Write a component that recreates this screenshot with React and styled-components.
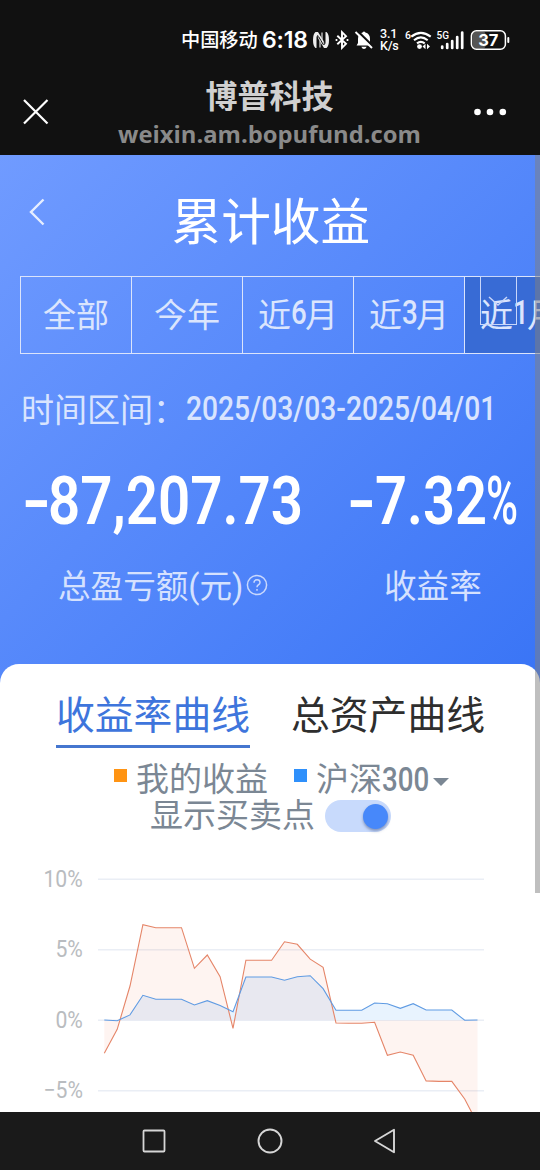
import React from "react";
import styled, { createGlobalStyle } from "styled-components";

const GlobalStyle = createGlobalStyle`
  * {
    box-sizing: border-box;
  }

  body {
    margin: 0;
    background: #fff;
    font-family: Roboto, "Noto Sans CJK SC", sans-serif;
  }
`;

const Phone = styled.div`
  display: flex;
  flex-direction: column;
  width: 540px;
  height: 1170px;
  overflow: hidden;
`;

const StatusBar = styled.div`
  display: flex;
  align-items: center;
  height: 65px;
  padding: 15px 0 0 181px;
  background: #111;
  color: #fff;
  white-space: nowrap;

  svg {
    flex: none;
    display: block;
  }
`;

const Carrier = styled.span`
  width: 81px;
  margin-top: 2px;
  font-size: 19.2px;
  font-weight: 500;
  line-height: 24px;
`;

const Clock = styled.span`
  width: 50px;
  font-family: Inter, sans-serif;
  font-size: 23px;
  font-weight: 600;
  line-height: 24px;
  letter-spacing: -0.2px;
`;

const IconGroup = styled.div`
  display: flex;
  align-items: center;
  gap: 5px;
  width: 68px;
`;

const NetSpeed = styled.div`
  display: flex;
  flex-direction: column;
  width: 24px;
  font-size: 12.5px;
  font-weight: 500;
  line-height: 12px;
  letter-spacing: -0.2px;
`;

const TitleBar = styled.div`
  display: flex;
  align-items: center;
  justify-content: space-between;
  height: 90px;
  padding: 4px 33px 0 23px;
  background: #111;
`;

const TitleText = styled.div`
  display: flex;
  flex-direction: column;
  align-items: center;
  width: 310px;
  margin: 3px 0 0 17px;

  strong {
    color: #d0d0d0;
    font-size: 32px;
    line-height: 40px;
    font-weight: 700;
  }

  span {
    color: #8a8a8a;
    font-family: "Open Sans", sans-serif;
    font-size: 23.8px;
    line-height: 34px;
    font-weight: 700;
  }
`;

const Page = styled.div`
  position: relative;
  flex: 1;
  overflow: hidden;
  background: linear-gradient(135deg, #709bff 0, #3a75f6 742px);
`;

const Scrollbar = styled.div`
  position: absolute;
  top: 0;
  right: 0;
  width: 5.5px;
  height: 738px;
  background: rgba(128, 128, 128, 0.5);
`;

const PageHead = styled.div`
  display: flex;
  align-items: flex-start;
  height: 121px;
  padding: 43px 0 0 29px;

  h1 {
    margin: -11px 0 0 126.5px;
    color: #fff;
    font-size: 49.7px;
    font-weight: 400;
    line-height: 72px;
  }
`;

const Ranges = styled.div`
  display: flex;
  width: 576px;
  height: 78px;
  margin-left: 20px;
  border: 1px solid #dbe4fb;
`;

const Range = styled.div`
  position: relative;
  display: flex;
  align-items: center;
  justify-content: center;
  flex: none;
  width: 111px;
  padding-bottom: 5px;
  border-right: 1px solid #dbe4fb;
  background: ${(p) => (p.$active ? "#386bd5" : "transparent")};
  color: #dbe5fd;
  font-size: 33px;
  white-space: nowrap;

  b {
    width: 14px;
    font-weight: 500;
    transform: scaleX(0.84);
    transform-origin: left center;
  }
`;

const DropMark = styled.div`
  position: absolute;
  top: -1px;
  left: 15px;
  width: 37px;
  height: 49px;
  padding: 19px 0 0 7px;
  border: 1px solid #c8d6fa;

  svg {
    display: block;
  }
`;

/* Narrow DIN-like figures */
const Num = styled.span`
  display: inline-block;
  font-family: Roboto, sans-serif;
  font-weight: ${(p) => p.$weight || 400};
  transform: scaleX(${(p) => p.$scale || 0.88});
  transform-origin: ${(p) => p.$origin || "left"} center;
  white-space: nowrap;
`;

const Period = styled.div`
  display: flex;
  align-items: center;
  height: 50px;
  margin-top: 29px;
  padding-left: 21px;
  color: #d9e4fe;
  font-size: 33px;

  > span:first-child {
    width: 165px;
    white-space: nowrap;
  }
`;

const Totals = styled.div`
  display: flex;
  height: 231px;
  padding-top: 32px;
  color: #fff;
`;

const Total = styled.div`
  width: ${(p) => p.$width}px;
  flex: none;
`;

const Figure = styled.div`
  display: flex;
  height: 74px;
  padding-left: ${(p) => p.$left}px;
  font-size: 66px;
  line-height: 74px;
`;

const Slot = styled.div`
  width: ${(p) => p.$width}px;
  flex: none;
`;

const Caption = styled.div`
  display: flex;
  align-items: center;
  height: 50px;
  margin-top: 19px;
  padding-left: ${(p) => p.$left}px;
  color: #d5e1fe;
  font-size: 32.6px;
  white-space: nowrap;

  svg {
    margin: 4px 0 0 3px;
  }
`;

const Card = styled.div`
  height: 460px;
  padding-top: 26px;
  border-radius: 19px 19px 0 0;
  background: #fff;
`;

const Tabs = styled.div`
  display: flex;
  gap: 41px;
  padding-left: 56px;
`;

const Tab = styled.div`
  height: 58px;
  border-bottom: 3px solid ${(p) => (p.$active ? "#4576cf" : "transparent")};
  color: ${(p) => (p.$active ? "#3e75dc" : "#2e2e2e")};
  font-size: 38.8px;
  line-height: 52px;
  white-space: nowrap;
`;

const Legend = styled.div`
  display: flex;
  align-items: center;
  height: 36px;
  margin-top: 14px;
  padding-left: 114px;
  color: #7b8794;
  font-size: 33px;
  line-height: 36px;
  white-space: nowrap;
`;

const Swatch = styled.i`
  width: 13px;
  height: 13px;
  margin: -9px 9px 0 ${(p) => p.$left || 0}px;
  background: ${(p) => p.$color};
`;

const Caret = styled.i`
  margin: 3px 0 0 -5px;
  border: 8px solid transparent;
  border-top-color: #7b8794;
  border-bottom: 0;
`;

const SwitchRow = styled.div`
  display: flex;
  align-items: center;
  height: 36px;
  padding-left: 150px;
  color: #7b8794;
  font-size: 33px;
  line-height: 38px;
`;

const Switch = styled.div`
  display: flex;
  align-items: center;
  justify-content: flex-end;
  width: 66px;
  height: 32px;
  margin-left: 10px;
  padding-right: 3px;
  border-radius: 16px;
  background: #c8dafc;

  &::after {
    content: "";
    width: 25px;
    height: 25px;
    border-radius: 50%;
    background: #4788fa;
    box-shadow: 0 2px 3px rgba(60, 80, 130, 0.5);
  }
`;

const ChartArea = styled.div`
  display: flex;
  height: 278px;
`;

const Axis = styled.div`
  display: flex;
  flex-direction: column;
  width: 83px;
  padding-top: 32px;
  color: #b9bcc0;
  font-size: 23px;

  span {
    height: 70.4px;
    line-height: 28px;
    text-align: right;
  }
`;

const NavBar = styled.div`
  display: flex;
  align-items: center;
  justify-content: space-between;
  height: 58px;
  padding: 0 143px 0 142px;
  background: #1a1a1a;
`;

const ranges = [
  { text: "全部" },
  { text: "今年" },
  { months: 6 },
  { months: 3 },
  { months: 1, active: true },
];

const mine = [
  -2.34, -0.64, 2.43, 6.78, 6.57, 6.57, 6.57, 3.69, 4.63, 3.09, -0.57, 4.26,
  4.26, 4.26, 5.57, 5.39, 4.33, 3.76, -0.19, -0.21, -0.21, -0.14, -2.48, -2.25,
  -2.48, -4.3, -4.33, -4.33, -5.58, -7.32,
];

const index300 = [
  0.02, -0.03, 0.38, 1.77, 1.49, 1.49, 1.49, 1.09, 1.39, 1.04, 0.61, 3.07,
  3.07, 3.07, 2.84, 3.09, 3.16, 2.24, 0.71, 0.71, 0.71, 1.23, 1.18, 0.85, 1.18,
  0.73, 0.73, 0.73, 0, 0.02,
];

const ZERO = 186.3;
const toY = (v) => ZERO - v * 14.1;
const toPoints = (data) =>
  data.map((v, i) => `${(21.3 + i * 12.87).toFixed(1)},${toY(v).toFixed(1)}`).join(" ");
const toArea = (data) => `21.3,${ZERO} ${toPoints(data)} 394.5,${ZERO}`;

const Chart = () => (
  <svg width="457" height="278">
    {[10, 5, 0, -5].map((v) => (
      <line key={v} x1="15" x2="401" y1={toY(v)} y2={toY(v)} stroke="#eaeef5" strokeWidth="1.5" />
    ))}
    <polygon points={toArea(index300)} fill="#e8f3fe" />
    <polygon points={toArea(mine)} fill="#f5623b" fillOpacity="0.07" />
    <polyline points={toPoints(mine)} fill="none" stroke="#e58568" strokeWidth="1.1" />
    <polyline points={toPoints(index300)} fill="none" stroke="#5f9be3" strokeWidth="1.1" />
  </svg>
);

const StatusIcons = () => (
  <>
    <IconGroup>
      <svg width="18" height="18" viewBox="0 0 18 18">
        <path d="M6 1H3.500Q1 3 1 9t2.500 8h1V5l7.500 12h2.500Q17 15 17 9t-2.500-8h-1v12L6 1z" fill="#eee" />
        <path d="M5.700 16.500V4.200M12.300 13.800V1.500" stroke="#111" strokeWidth="1" />
        <path d="M6.500 5.500 11.500 14" stroke="#111" strokeWidth="1" />
        <path d="M8 9.500V16.500M10 8.500V1.500" stroke="#ddd" strokeWidth="1.200" />
      </svg>
      <svg width="14" height="20" viewBox="0 0 14 20">
        <path d="M2.300 5.800 11 13.800 7 17.800V2.200l4 4-8.700 8" fill="none" stroke="#fff" strokeWidth="1.900" />
        <path d="M1.500 9v2M12.500 9v2" stroke="#fff" strokeWidth="1.700" />
      </svg>
      <svg width="20" height="20" viewBox="0 0 20 20">
        <path d="M2.600 15.500 4 13V9q0-5.300 4.600-6.500Q10 .4 11.400 2.500 16 3.700 16 9v4l1.400 2.500z" fill="#fff" />
        <path d="M7.300 16.800h5.400q-1 2.200-2.700 2.200t-2.700-2.200z" fill="#fff" />
        <path d="M3.500 1 19.500 17" stroke="#111" strokeWidth="2.400" />
        <path d="M1.500 2 18 18" stroke="#fff" strokeWidth="1.900" />
      </svg>
    </IconGroup>
    <NetSpeed>
      <span>3.1</span>
      <span>K/s</span>
    </NetSpeed>
    <svg width="28" height="22" viewBox="-1 0 28 22">
      <text x="0" y="9.500" fill="#fff" fontSize="10.500" fontWeight="500" fontFamily="Roboto">6</text>
      <g fill="none" stroke="#fff" strokeWidth="2.100">
        <path d="M6.300 7.600Q15.800 0 25.700 7.600" />
        <path d="M9 11.200Q15.800 5.600 22.700 11.200" />
        <path d="M12 14.400Q15.800 11.400 19.700 14.400" />
      </g>
      <circle cx="14.500" cy="17.600" r="2.400" fill="#fff" />
      <path d="M20.500 14.800v5.400l-3-2.700zM22 14.800v5.400l3-2.700z" fill="#fff" />
    </svg>
    <svg width="36" height="22" viewBox="-1 0 36 22">
      <text x="3.500" y="10" fill="#fff" fontSize="11" fontWeight="500" fontFamily="Roboto" textLength="12.500" lengthAdjust="spacingAndGlyphs">5G</text>
      <path d="M9.200 17.500v1.500M14.200 15v4M19.200 12V19M24.200 8V19M29.200 3.500V19" stroke="#fff" strokeWidth="2.700" strokeLinecap="round" />
    </svg>
    <svg width="42" height="22" viewBox="0 0 42 22">
      <rect x="4.500" y="2.500" width="13" height="17" rx="3" fill="#555" />
      <rect x="3.400" y="1.700" width="34" height="18.600" rx="5" fill="none" stroke="#fff" strokeWidth="1.500" />
      <path d="M40.300 9v4" stroke="#fff" strokeWidth="2" strokeLinecap="round" />
      <text x="20.300" y="17" fill="#fff" fontSize="16.500" fontWeight="700" fontFamily="Inter" textAnchor="middle">37</text>
    </svg>
  </>
);

const App = () => {
  return (
    <Phone>
      <GlobalStyle />
      <StatusBar>
        <Carrier>中国移动</Carrier>
        <Clock>6:18</Clock>
        <StatusIcons />
      </StatusBar>
      <TitleBar>
        <svg width="26" height="26" viewBox="0 0 26 26">
          <path d="M1 1 24.500 24.500M24.500 1 1 24.500" stroke="#fff" strokeWidth="2.200" />
        </svg>
        <TitleText>
          <strong>博普科技</strong>
          <span>weixin.am.bopufund.com</span>
        </TitleText>
        <svg width="34" height="8" viewBox="0 0 34 8" fill="#fff">
          <circle cx="4.500" cy="4" r="3.300" />
          <circle cx="17" cy="4" r="3.300" />
          <circle cx="29.800" cy="4" r="3.300" />
        </svg>
      </TitleBar>
      <Page>
        <PageHead>
          <svg width="16" height="28" viewBox="0 0 16 28">
            <path d="M14.500 1.500 2 14l12.500 12.500" fill="none" stroke="#e6eeff" strokeWidth="2.400" />
          </svg>
          <h1>累计收益</h1>
        </PageHead>
        <Ranges>
          {ranges.map(({ text, months, active }) => (
            <Range key={text || months} $active={active}>
              {text || (
                <>
                  近<b>{months}</b>月
                </>
              )}
              {active && (
                <DropMark>
                  <svg width="20" height="14" viewBox="0 0 20 14">
                    <path d="M1 1l9 8 9-8" fill="none" stroke="#c8d6fa" strokeWidth="1.500" />
                  </svg>
                </DropMark>
              )}
            </Range>
          ))}
        </Ranges>
        <Period>
          <span>时间区间：</span>
          <Num $weight={500} $scale={0.855}>2025/03/03-2025/04/01</Num>
        </Period>
        <Totals>
          <Total $width={346}>
            <Figure $left={22}>
              <Slot $width={26}>
                <Num $weight={600} $scale={1.2}>-</Num>
              </Slot>
              <Num $weight={600} $scale={0.855}>87,207.73</Num>
            </Figure>
            <Caption $left={58}>
              总盈亏额(元)
              <svg width="22" height="22" viewBox="0 0 22 22" fill="none" stroke="#c9d8fd" strokeWidth="1.500">
                <circle cx="11" cy="11" r="9.600" />
                <path d="M8 8.800Q8 5.800 11 5.800t3 2.700q0 1.500-1.800 2.500Q11 11.700 11 13.300M11 15v1.800" />
              </svg>
            </Caption>
          </Total>
          <Total $width={194}>
            <Figure $left={1}>
              <Slot $width={28}>
                <Num $weight={600} $scale={1.2}>-</Num>
              </Slot>
              <Slot $width={111}>
                <Num $weight={600} $scale={0.85}>7.32</Num>
              </Slot>
              <Num $weight={500} $scale={0.66}>%</Num>
            </Figure>
            <Caption $left={38}>收益率</Caption>
          </Total>
        </Totals>
        <Card>
          <Tabs>
            <Tab $active>收益率曲线</Tab>
            <Tab>总资产曲线</Tab>
          </Tabs>
          <Legend>
            <Swatch $color="#ff9413" />
            我的收益
            <Swatch $color="#2f90fb" $left={26} />
            沪深<Num $weight={500} $scale={0.84}>300</Num>
            <Caret />
          </Legend>
          <SwitchRow>
            显示买卖点
            <Switch />
          </SwitchRow>
          <ChartArea>
            <Axis>
              {["10%", "5%", "0%", "−5%"].map((label) => (
                <span key={label}>
                  <Num $scale={0.92} $origin="right">{label}</Num>
                </span>
              ))}
            </Axis>
            <Chart />
          </ChartArea>
        </Card>
        <Scrollbar />
      </Page>
      <NavBar>
        <svg width="24" height="24" viewBox="0 0 24 24">
          <rect x="1.500" y="1.500" width="21" height="21" rx="1" fill="none" stroke="#d6d6d6" strokeWidth="1.800" />
        </svg>
        <svg width="26" height="26" viewBox="0 0 26 26">
          <circle cx="13" cy="13" r="11.500" fill="none" stroke="#d6d6d6" strokeWidth="1.900" />
        </svg>
        <svg width="24" height="26" viewBox="0 0 24 26">
          <path d="M21 1.800v22.400L2 13z" fill="none" stroke="#d6d6d6" strokeWidth="1.900" strokeLinejoin="round" />
        </svg>
      </NavBar>
    </Phone>
  );
};

export default App;
